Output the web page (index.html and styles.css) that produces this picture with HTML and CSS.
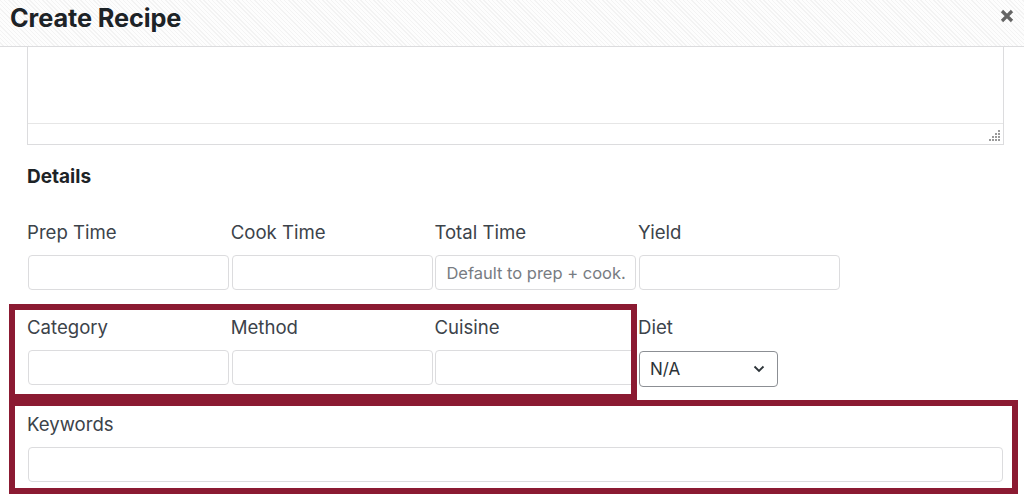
FILE: index.html
```html
<!DOCTYPE html>
<html>
<head>
  <title>Create Recipe</title>
  <link rel="stylesheet" href="styles.css">
</head>
<body>
  <div class="modal">
    <div class="modal-header">
      <h1 class="modal-title">Create Recipe</h1>
      <button class="close" type="button" aria-label="Close">
        <svg width="14" height="14" viewBox="0 0 14 14">
          <path d="M2 2 L12 12 M12 2 L2 12" stroke="#656565" stroke-width="3.2" stroke-linecap="butt"/>
        </svg>
      </button>
    </div>

    <div class="modal-body">
      <div class="editor">
        <div class="editor-area"></div>
        <div class="editor-status">
          <svg class="grip" width="12" height="12" viewBox="0 0 12 12">
            <rect x="10" y="1" width="2" height="2" fill="#9a9a9a"/>
            <rect x="10" y="4" width="2" height="2" fill="#9a9a9a"/>
            <rect x="7" y="4" width="2" height="2" fill="#9a9a9a"/>
            <rect x="10" y="7" width="2" height="2" fill="#9a9a9a"/>
            <rect x="7" y="7" width="2" height="2" fill="#9a9a9a"/>
            <rect x="4" y="7" width="2" height="2" fill="#9a9a9a"/>
            <rect x="10" y="10" width="2" height="2" fill="#9a9a9a"/>
            <rect x="7" y="10" width="2" height="2" fill="#9a9a9a"/>
            <rect x="4" y="10" width="2" height="2" fill="#9a9a9a"/>
            <rect x="1" y="10" width="2" height="2" fill="#9a9a9a"/>
          </svg>
        </div>
      </div>

      <h2 class="section-title">Details</h2>

      <div class="fields">
        <div class="field">
          <label>Prep Time</label>
          <input type="text">
        </div>
        <div class="field">
          <label>Cook Time</label>
          <input type="text">
        </div>
        <div class="field">
          <label>Total Time</label>
          <input type="text" placeholder="Default to prep + cook.">
        </div>
        <div class="field">
          <label>Yield</label>
          <input type="text">
        </div>
      </div>

      <div class="fields">
        <div class="field">
          <label>Category</label>
          <input type="text">
        </div>
        <div class="field">
          <label>Method</label>
          <input type="text">
        </div>
        <div class="field">
          <label>Cuisine</label>
          <input type="text">
        </div>
        <div class="field">
          <label>Diet</label>
          <div class="select">
            <span>N/A</span>
            <svg width="12" height="8" viewBox="0 0 12 8">
              <path d="M1.5 1.5 L6 6 L10.5 1.5" fill="none" stroke="#2c3338" stroke-width="1.8"/>
            </svg>
          </div>
        </div>
      </div>

      <div class="field wide">
        <label>Keywords</label>
        <input type="text">
      </div>
    </div>

    <!-- highlight annotations -->
    <div class="highlight highlight-taxonomies"></div>
    <div class="highlight highlight-keywords"></div>
  </div>
</body>
</html>
```

FILE: styles.css
```css
body {
  margin: 0;
  background: #fff;
  font-family: Inter, "Liberation Sans", sans-serif;
  color: #3c434a;
  overflow: hidden;
}

.modal {
  position: relative;
  height: 503px;
}

.modal-header {
  height: 46px;
  display: flex;
  align-items: center;
  justify-content: space-between;
  padding: 0 10px 0 10px;
  border-bottom: 1px solid #dcdcde;
  background: repeating-linear-gradient(45deg, #fdfdfd 0, #fdfdfd 2px, #f3f3f3 2px, #f3f3f3 3px);
}

.modal-title {
  margin: 0 0 12px 0;
  font-size: 25.3px;
  font-weight: 700;
  color: #1d2327;
  letter-spacing: -0.1px;
}

.close {
  border: 0;
  background: none;
  padding: 0;
  margin: 0 0 14px 0;
  display: flex;
}

.modal-body {
  padding: 0 20px 0 27px;
}

.editor {
  border: 1px solid #dcdcde;
  border-top: 0;
}

.editor-area {
  height: 76px;
  border-bottom: 1px solid #e6e6e6;
}

.editor-status {
  height: 20px;
  display: flex;
  justify-content: flex-end;
  align-items: flex-end;
  padding: 0 3px 3px 0;
  box-sizing: border-box;
}

.section-title {
  margin: 20px 0 0 0;
  font-size: 19px;
  line-height: 24px;
  font-weight: 700;
  color: #1d2327;
}

.fields {
  display: flex;
  gap: 2.7px;
  margin-top: 31px;
}

.fields + .fields,
.fields + .wide {
  margin-top: 25px;
}

.field {
  width: 201px;
  display: flex;
  flex-direction: column;
}

.field label {
  font-size: 18.6px;
  line-height: 24px;
  height: 24px;
  margin-bottom: 11px;
}

.field input {
  box-sizing: border-box;
  height: 35px;
  width: 100%;
  margin: 0 0 0 1px;
  padding: 0 10px;
  border: 1px solid #dcdcde;
  border-radius: 4px;
  font-family: inherit;
  font-size: 16.5px;
  color: #2c3338;
  background: #fff;
}

.field input::placeholder {
  color: #787c82;
}

.field.wide {
  width: auto;
}

.field.wide input {
  width: 975px;
}

.select {
  box-sizing: border-box;
  width: 139px;
  height: 36px;
  margin: 1px 0 0 1px;
  padding: 0 12px 0 10px;
  border: 1px solid #8c8f94;
  border-radius: 4px;
  display: flex;
  align-items: center;
  justify-content: space-between;
  font-size: 17px;
  color: #2c3338;
}

.highlight {
  position: absolute;
  border: 6px solid #8b1a32;
  box-sizing: border-box;
}

.highlight-taxonomies {
  left: 9px;
  top: 304px;
  width: 628px;
  height: 96px;
}

.highlight-keywords {
  left: 9px;
  top: 400px;
  width: 1009px;
  height: 94px;
}
```
